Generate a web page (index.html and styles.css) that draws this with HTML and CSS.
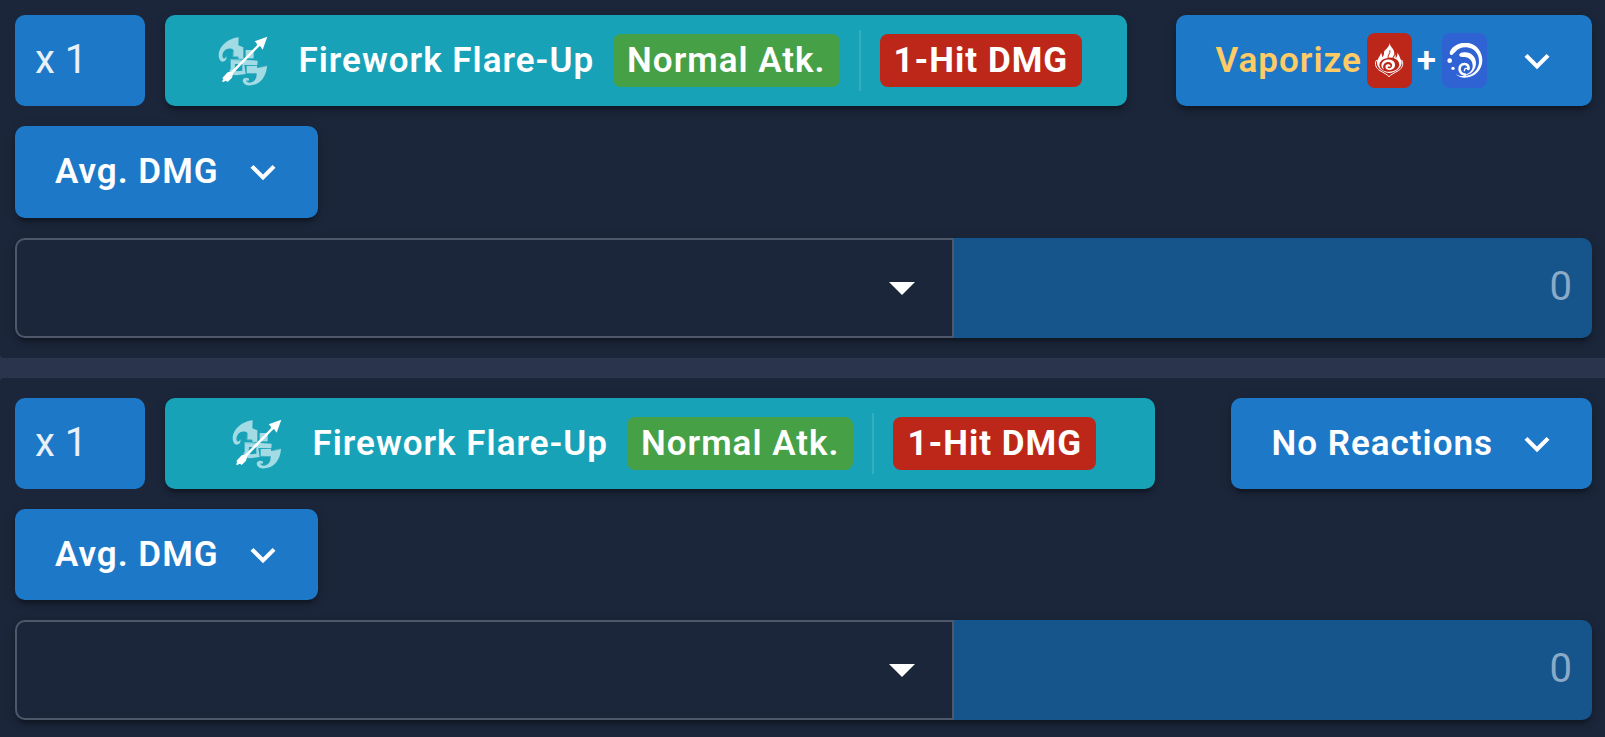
FILE: index.html
```html
<!DOCTYPE html>
<html lang="en">
<head>
<meta charset="utf-8">
<meta name="viewport" content="width=device-width, initial-scale=1">
<title>Optimization Targets</title>
<link rel="stylesheet" href="styles.css">
</head>
<body>
<svg class="defs" aria-hidden="true">
  <symbol id="bow" viewBox="28 20 210 210">
    <g fill="#a3dbe4">
      <path d="M117 54C90 56 58 78 57 108C58 124 66 131 75 125C81 121 82 115 79 110C79 116 75 119 70 116C66 110 69 96 80 90C86 87 91 87 98 89L101 92V112L116 112V118L131 119V84L116 78Z"/>
      <path d="M138 92H162V117H138Z"/>
      <path fill-rule="evenodd" d="M93 119L174 124L173 138L134 137L138 164L110 168L89 165L90 152L93 150ZM106 134L105 152L112 156L128 154V134Z"/>
      <path d="M141 140H172V146L202 139C201 162 190 186 168 195C150 201 133 200 129 185C130 175 139 173 147 177C150 182 147 187 140 183C140 190 153 193 162 186C169 180 171 173 171 162H141Z"/>
    </g>
    <path d="M101 91L99 112L116 113M94 121L130 123M142 162L166 163M177 145L200 140" fill="none" stroke="#4fb3c2" stroke-width="2"/>
    <path d="M70 188L79 184L84 188L97 175L101 161L176 84L181 80L189 91L203 52L165 66L171 72L172 78L94 157L84 159L68 176L71 180L67 186Z" fill="#fff"/>
  </symbol>
  <symbol id="pyro" viewBox="64 67 108 108">
    <path fill="#fff" d="M120 67C121 80 135 84 134 99C133 105 129 108 127 114C132 113 136 108 136 101C139 105 138 109 138 113C142 109 144 103 143 96C151 106 150 112 155 119C158 129 154 140 144 147C137 153 128 156 119 157C110 156 101 153 94 147C84 140 80 129 83 119C86 111 92 106 94 96C97 101 98 105 97 110C101 107 103 103 103 98C101 87 118 84 120 67Z"/>
    <path d="M121 90C123 98 113 103 115 111" fill="none" stroke="#bd2719" stroke-width="3" stroke-linecap="round"/>
    <path fill="#bd2719" d="M118 111C133 109 149 119 149 132C148 144 135 153 118 153C102 153 90 145 89 132C90 119 104 112 118 111Z"/>
    <path fill="#fff" d="M103 147C93 141 93 129 101 122C110 114 127 114 134 125C141 138 131 150 117 148C106 146 104 135 113 131C119 129 124 133 122 138C117 136 113 138 114 141C117 145 125 143 127 137C129 128 120 122 111 125C100 129 98 139 103 147Z"/>
    <path d="M81 118C73 129 79 143 91 150C103 157 113 162 118 168C123 162 134 157 146 150C158 143 163 129 156 118" fill="none" stroke="#fff" stroke-width="3"/>
  </symbol>
  <symbol id="hydro" viewBox="290 67 108 108">
    <g fill="#fff">
      <path d="M299 101C294 91 314 66 345 66C376 66 396 91 396 119C396 148 373 171 343 171C333 171 322 167 316 160C326 166 333 167 343 166C367 165 385 147 386 124C387 99 371 82 348 80C322 78 313 99 306 102Q301 104 299 101Z"/>
      <path d="M328 107C323 99 334 95 344 95C363 95 377 109 377 128C377 146 363 163 343 164C360 157 368 147 367 134C366 118 354 109 342 109Q331 110 328 107Z"/>
      <circle cx="298" cy="120" r="7"/>
      <circle cx="308" cy="143" r="5"/>
    </g>
    <path d="M354 145C356 136 351 130 343 130C332 130 326 138 328 148C330 156 336 161 344 162" fill="none" stroke="#fff" stroke-width="8" stroke-linecap="round"/>
    <path d="M354 145C349 141 342 143 342 150" fill="none" stroke="#fff" stroke-width="4" stroke-linecap="round"/>
  </symbol>
  <symbol id="chevron" viewBox="0 0 24 24">
    <path fill="currentColor" d="M7.41 8.59 12 13.17l4.59-4.58L18 10l-6 6-6-6z"/>
  </symbol>
</svg>
<main class="targets">
  <section class="card">
    <div class="row">
      <input class="multiplier" type="text" value="x 1" aria-label="Multiplier">
      <button class="btn target" type="button">
        <svg class="bow" aria-hidden="true"><use href="#bow"/></svg>
        <span>Firework Flare-Up</span>
        <span class="badge normal">Normal Atk.</span>
        <span class="rule"></span>
        <span class="badge hit">1-Hit DMG</span>
      </button>
      <span class="spacer"></span>
      <button class="btn menu" type="button">
        <span class="reaction"><span class="vaporize">Vaporize</span><span class="element pyro"><svg aria-hidden="true"><use href="#pyro"/></svg></span><span class="plus">+</span><span class="element hydro"><svg aria-hidden="true"><use href="#hydro"/></svg></span></span>
        <svg class="chevron" aria-hidden="true"><use href="#chevron"/></svg>
      </button>
    </div>
    <div class="row">
      <button class="btn menu" type="button">Avg. DMG
        <svg class="chevron" aria-hidden="true"><use href="#chevron"/></svg>
      </button>
    </div>
    <div class="group">
      <div class="picker">
        <select class="stat" aria-label="Stat"><option></option></select>
        <svg class="caret" viewBox="0 0 26 13" aria-hidden="true"><path d="M0 0H26L13 13Z" fill="#fff"/></svg>
      </div>
      <input class="amount" type="text" value="0" aria-label="Minimum value" disabled>
    </div>
  </section>
  <section class="card">
    <div class="row">
      <input class="multiplier" type="text" value="x 1" aria-label="Multiplier">
      <button class="btn target" type="button">
        <svg class="bow" aria-hidden="true"><use href="#bow"/></svg>
        <span>Firework Flare-Up</span>
        <span class="badge normal">Normal Atk.</span>
        <span class="rule"></span>
        <span class="badge hit">1-Hit DMG</span>
      </button>
      <span class="spacer"></span>
      <button class="btn menu" type="button">No Reactions
        <svg class="chevron" aria-hidden="true"><use href="#chevron"/></svg>
      </button>
    </div>
    <div class="row">
      <button class="btn menu" type="button">Avg. DMG
        <svg class="chevron" aria-hidden="true"><use href="#chevron"/></svg>
      </button>
    </div>
    <div class="group">
      <div class="picker">
        <select class="stat" aria-label="Stat"><option></option></select>
        <svg class="caret" viewBox="0 0 26 13" aria-hidden="true"><path d="M0 0H26L13 13Z" fill="#fff"/></svg>
      </div>
      <input class="amount" type="text" value="0" aria-label="Minimum value" disabled>
    </div>
  </section>
</main>
</body>
</html>
```
FILE: styles.css
```css
* {
  box-sizing: border-box;
}

body {
  margin: 0;
  background: #2a354d;
  color: #fff;
  font-family: Roboto, "Liberation Sans", sans-serif;
}

button,
input,
select {
  margin: 0;
  border: 0;
  color: inherit;
  font-family: inherit;
}

.defs {
  display: none;
}

.targets {
  display: flex;
  flex-direction: column;
  gap: 20px;
}

.card {
  display: flex;
  flex-direction: column;
  gap: 20px;
  padding: 20px 13px 20px 15px;
  background: #1b263a;
}

.card:first-child {
  padding-top: 15px;
  border-radius: 0 0 0 4px;
}

.card:first-child .row + .row {
  min-height: 92px;
}

.card:last-child {
  padding-bottom: 17px;
  border-radius: 4px 0 0 0;
}

.row {
  display: flex;
  gap: 20px;
}

.multiplier {
  width: 130px;
  padding: 0 20px 2px;
  border-radius: 10px;
  background: #1e78c8;
  color: #e8f1f9;
  font-size: 40px;
}

.btn {
  display: flex;
  align-items: center;
  justify-content: center;
  min-height: 91px;
  padding: 0 40px;
  border-radius: 10px;
  font-size: 35px;
  font-weight: 600;
  letter-spacing: 1px;
  line-height: 60px;
  white-space: nowrap;
  box-shadow: 0 8px 2px -5px rgba(0, 0, 0, 0.2), 0 5px 5px rgba(0, 0, 0, 0.14), 0 2px 12px rgba(0, 0, 0, 0.12);
}

.target {
  flex: 1 0 auto;
  gap: 19px;
  background: #18a2b8;
}

.menu {
  gap: 19px;
  padding-right: 30px;
  background: #1e78c8;
}

.spacer {
  flex: 1;
}

.bow {
  width: 70px;
  height: 70px;
}

.badge {
  padding: 0 14px;
  border-radius: 8px;
  line-height: 53px;
}

.normal {
  background: #46a046;
}

.hit {
  background: #bd2719;
  font-weight: 700;
}

.rule {
  width: 2px;
  height: 61px;
  background: rgba(255, 255, 255, 0.12);
}

.reaction {
  display: flex;
  align-items: center;
  padding-right: 6px;
}

.vaporize {
  margin-right: 5px;
  color: #ffcb65;
}

.plus {
  margin: 0 5px;
}

.element {
  display: flex;
  align-items: center;
  justify-content: center;
  width: 45px;
  height: 55px;
  border-radius: 8px;
}

.element svg {
  width: 36px;
  height: 36px;
}

.pyro {
  background: #bd2719;
}

.hydro {
  background: #2f63d4;
}

.chevron {
  width: 50px;
  height: 50px;
}

.group {
  display: grid;
  grid-template-columns: 939fr 638fr;
  height: 100px;
  border-radius: 10px;
  box-shadow: 0 8px 2px -5px rgba(0, 0, 0, 0.2), 0 5px 5px rgba(0, 0, 0, 0.14), 0 2px 12px rgba(0, 0, 0, 0.12);
}

.picker {
  display: grid;
  align-items: center;
}

.stat,
.caret {
  grid-area: 1 / 1;
}

.stat {
  width: 100%;
  height: 100%;
  padding: 0 80px 0 20px;
  border: 2px solid #4f586a;
  border-radius: 10px 0 0 10px;
  background: #1b263a;
  font-size: 40px;
  appearance: none;
}

.caret {
  justify-self: end;
  width: 26px;
  height: 13px;
  margin-right: 39px;
  pointer-events: none;
}

.amount {
  width: 100%;
  padding: 0 20px 3px;
  border-radius: 0 10px 10px 0;
  background: #16548c;
  color: #8baac6;
  font-size: 40px;
  text-align: right;
}
```
